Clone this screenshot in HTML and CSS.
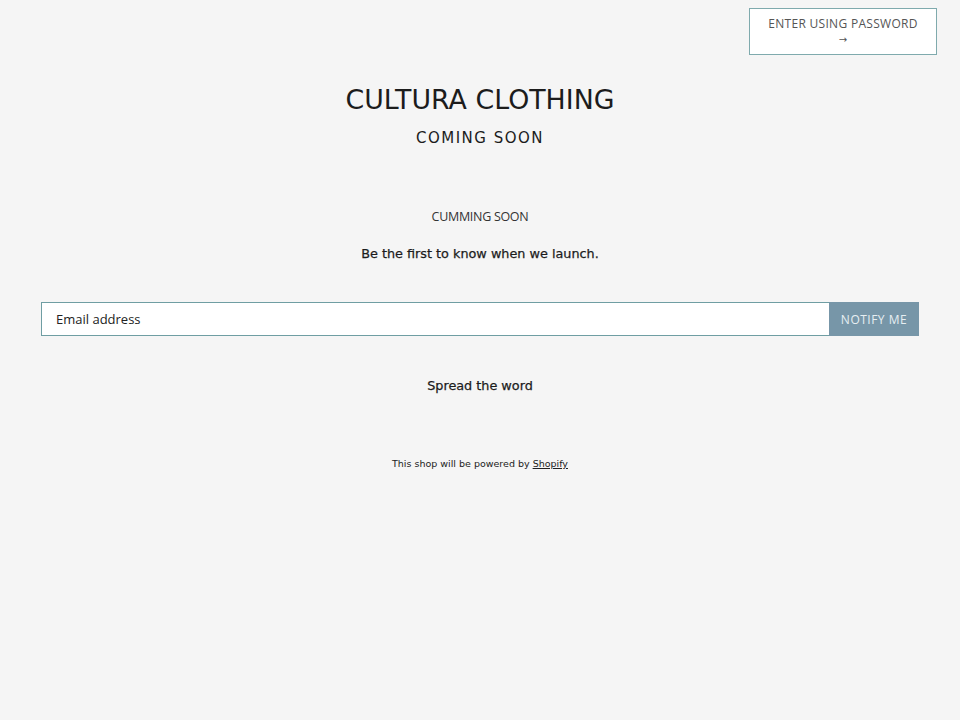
FILE: index.html
```html
<!DOCTYPE html>
<html lang="en">
<head>
    <meta charset="UTF-8">
    <meta name="viewport" content="width=device-width, initial-scale=1.0">
    <title>Cultura Clothing - Coming Soon</title>
    <link rel="stylesheet" href="styles.css">
</head>
<body>

<header class="top-bar">
    <a href="#" class="password-link">ENTER USING PASSWORD<br><span class="arrow">&rarr;</span></a>
</header>

<main class="page">
    <h1 class="shop-name">CULTURA CLOTHING</h1>
    <h2 class="status">COMING SOON</h2>

    <p class="message">CUMMING SOON</p>
    <p class="tagline">Be the first to know when we launch.</p>

    <form class="signup" onsubmit="return false;">
        <input type="email" class="email" placeholder="Email address">
        <button type="submit" class="notify">NOTIFY ME</button>
    </form>

    <p class="share">Spread the word</p>

    <footer class="powered">
        This shop will be powered by <a href="#">Shopify</a>
    </footer>
</main>

</body>
</html>
```

FILE: styles.css
```css
body {
    margin: 0;
    background-color: #f5f5f5;
    font-family: "DejaVu Sans", Verdana, sans-serif;
    color: #1c1c1c;
}

.top-bar {
    display: flex;
    justify-content: flex-end;
    padding: 8px 23px 0 0;
}

.password-link {
    display: block;
    width: 188px;
    box-sizing: border-box;
    padding: 7px 0 7px;
    border: 1px solid #7faaad;
    background-color: #fff;
    color: #555;
    font-family: "Open Sans", sans-serif;
    font-size: 12px;
    letter-spacing: 0.3px;
    line-height: 15px;
    text-align: center;
    text-decoration: none;
}

.password-link .arrow {
    font-family: "DejaVu Sans", sans-serif;
    font-size: 10px;
}

.page {
    display: flex;
    flex-direction: column;
    align-items: center;
    padding: 0 41px;
    text-align: center;
}

.shop-name {
    margin: 29px 0 0;
    font-size: 26.8px;
    font-weight: 400;
    line-height: 32px;
}

.status {
    margin: 12px 0 0;
    font-size: 15px;
    font-weight: 400;
    letter-spacing: 1.5px;
    line-height: 20px;
}

.message {
    margin: 60px 0 0;
    font-family: "Open Sans", sans-serif;
    font-size: 12.5px;
    letter-spacing: -0.3px;
    color: #333;
    line-height: 18px;
}

.tagline {
    margin: 19px 0 0;
    font-size: 12.8px;
    line-height: 18px;
    -webkit-text-stroke: 0.25px #1c1c1c;
}

.signup {
    display: flex;
    width: 100%;
    margin-top: 39px;
}

.email {
    flex: 1;
    height: 34px;
    box-sizing: border-box;
    padding: 0 14px;
    border: 1px solid #6f9ea3;
    border-right: none;
    background-color: #fff;
    font-family: "Open Sans", sans-serif;
    font-size: 13px;
    color: #222;
}

.email::placeholder {
    color: #222;
}

.notify {
    width: 90px;
    height: 34px;
    border: none;
    background-color: #7796a8;
    color: #e6eef2;
    font-family: "Open Sans", sans-serif;
    font-size: 12px;
    letter-spacing: 0.5px;
    cursor: pointer;
}

.share {
    margin: 41px 0 0;
    font-size: 12.8px;
    line-height: 18px;
    -webkit-text-stroke: 0.25px #1c1c1c;
}

.powered {
    margin-top: 62px;
    font-size: 9.5px;
    line-height: 14px;
    color: #222;
}

.powered a {
    color: #222;
}
```
